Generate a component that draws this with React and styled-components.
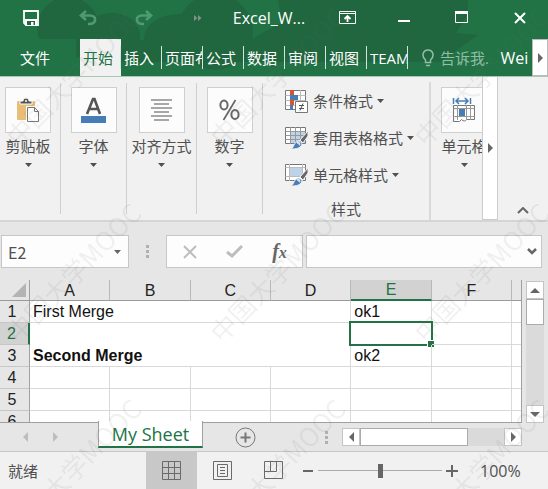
import React, { useState } from "react";
import styled, { createGlobalStyle } from "styled-components";

const UI_FONT = '"Open Sans", "Noto Sans CJK SC", sans-serif';
const CELL_FONT = '"Liberation Sans", Arial, sans-serif';
const GREEN = "#217346";

const GlobalStyle = createGlobalStyle`
  *, *::before, *::after { box-sizing: border-box; }
  body { margin: 0; font-family: ${UI_FONT}; font-size: 15px; color: #505050; }
  button, input { font: inherit; color: inherit; }
  button { padding: 0; border: 0; background: none; white-space: nowrap; }
  svg { display: block; flex: none; }
`;

const Window = styled.div`
  position: relative;
  display: flex;
  flex-direction: column;
  height: 100vh;
  overflow: hidden;
  background: #e6e6e6;
`;

const Header = styled.header`
  position: relative;
  flex: none;
  color: #fff;
  background: ${GREEN};
  border-bottom: 1px solid #a8c8b5;
`;

const Backdrop = styled.svg`
  position: absolute;
  inset: 0;
  width: 100%;
  height: 100%;
`;

const TitleBar = styled.div`
  position: relative;
  display: grid;
  grid-template-columns: 62px 52px 60px 48px 94px 62px 52px 62px 1fr;
  align-items: center;
  height: 39px;
  padding-bottom: 4px;
`;

const TitleButton = styled.button`
  display: flex;
  align-items: center;
  justify-content: center;
  height: 32px;
  color: ${(p) => (p.$muted ? "#4f9a70" : "#fff")};
`;

const Title = styled.div`
  font-size: 16px;
  text-align: center;
  white-space: nowrap;
`;

const Tabs = styled.nav`
  position: relative;
  display: flex;
  height: 37px;
`;

const Tab = styled.button`
  width: 41px;
  padding: 0 3px;
  display: flex;
  align-items: center;
  overflow: hidden;
  color: ${(p) => (p.$active ? GREEN : "#fff")};
  background: ${(p) => (p.$active ? "#f1f1f1" : "transparent")};
`;

const TabText = styled.span`
  flex: 1;
  overflow: hidden;
  text-align: left;
`;

const TabDivider = styled.span`
  flex: none;
  width: 1px;
  height: 23px;
  margin-right: -3px;
  background: #d5e5db;
`;

const FileTab = styled.button`
  width: 76px;
  margin-right: 4px;
  padding-right: 6px;
  background: ${GREEN};
`;

const TellMe = styled.button`
  display: flex;
  align-items: center;
  gap: 6px;
  margin-left: 14px;
  color: #93bda5;
`;

const Account = styled.button`
  flex: 1;
  padding-left: 8px;
  font-size: 16px;
  text-align: center;
`;

const TabScroll = styled.button`
  display: flex;
  align-items: center;
  justify-content: center;
  width: 16px;
  background: #fff;
  border: 1px solid #bbb;
  color: #666;
`;

const Ribbon = styled.section`
  flex: none;
  display: flex;
  height: 145px;
  background: #f1f1f1;
  border-bottom: 2px solid #d5d5d5;
`;

const Group = styled.div`
  flex: none;
  width: ${(p) => p.$width}px;
  margin: 6px 0;
  padding: 4px ${(p) => p.$pad || 0}px 0 0;
  border-right: 1px solid #cfcfcf;
`;

const BigButton = styled.button`
  display: flex;
  flex-direction: column;
  align-items: center;
  width: 100%;
`;

const IconBox = styled.span`
  display: flex;
  align-items: center;
  justify-content: center;
  width: 46px;
  height: 46px;
  margin-bottom: 2px;
  background: #fcfcfc;
  border: 1px solid #cfcfcf;
`;

const BigLabel = styled.span`
  height: 24px;
  margin-bottom: 4px;
  line-height: 22px;
`;

const StyleGroup = styled.div`
  flex: none;
  display: flex;
  flex-direction: column;
  width: 168px;
  margin-top: 5px;
  padding-left: 22px;
  border-right: 2px solid #d9d9d9;
`;

const StyleButton = styled.button`
  flex: none;
  display: flex;
  align-items: center;
  gap: 4px;
  height: 37px;
`;

const GroupName = styled.div`
  margin: 6px 22px 0 0;
  line-height: 20px;
  text-align: center;
`;

const ClippedGroup = styled.div`
  flex: none;
  width: 51px;
  margin-top: 6px;
  padding: 4px 0 0 10px;
  overflow: hidden;
`;

const ClippedInner = styled.div`
  width: 46px;
`;

const RibbonScroll = styled.button`
  display: flex;
  align-items: center;
  justify-content: center;
  width: 16px;
  background: #fff;
  border: 1px solid #ccc;
  border-top: 0;
  color: #666;
`;

const Collapse = styled.button`
  flex: 1;
  display: flex;
  align-items: flex-end;
  justify-content: center;
  padding-bottom: 6px;
  color: #666;
`;

const FormulaBar = styled.section`
  flex: none;
  display: flex;
  padding: 13px 6px 12px 1px;
`;

const Field = styled.div`
  display: flex;
  align-items: center;
  height: 33px;
  background: #fdfdfd;
  border: 1px solid #c6c6c6;
`;

const NameBox = styled(Field)`
  width: 128px;
  padding: 0 7px 0 6px;
`;

const FunctionBox = styled(Field)`
  width: 137px;
  margin-right: 3px;
`;

const FormulaField = styled(Field)`
  flex: 1;
  padding-right: 4px;
`;

const TextInput = styled.input`
  flex: 1;
  min-width: 0;
  padding: 0;
  border: 0;
  outline: 0;
  background: none;
  font-size: 16px;
  font-family: "Noto Sans CJK SC", sans-serif;
`;

const PlainButton = styled.button`
  display: flex;
  align-items: center;
  justify-content: center;
  flex: ${(p) => (p.$grow ? 1 : "none")};
  color: ${(p) => p.$color || "#666"};
`;

const FxText = styled.span`
  font: italic 700 20px/24px "Liberation Serif", serif;
`;

const FxSub = styled.span`
  font-size: 16px;
`;

const Grip = styled.span`
  display: flex;
  flex-direction: column;
  align-items: center;
  justify-content: center;
  gap: 2px;
  width: ${(p) => p.$width}px;
`;

const GripDot = styled.span`
  width: 3px;
  height: 3px;
  background: #b0b0b0;
`;

const Workspace = styled.main`
  flex: 1;
  min-height: 0;
  display: flex;
`;

const SheetView = styled.div`
  flex: 1;
  min-width: 0;
  overflow: hidden;
  border-bottom: 1px solid #a0a0a0;
`;

const Sheet = styled.table`
  width: 100%;
  table-layout: fixed;
  border-collapse: separate;
  border-spacing: 0;
  border-right: 1px solid #a0a0a0;
  font-family: ${CELL_FONT};
  font-size: 16px;
  line-height: 20px;
  color: #111;
  background: #fff;
`;

const Col = styled.col`
  width: ${(p) => (p.$width ? `${p.$width}px` : "auto")};
`;

const HeadCell = styled.th`
  height: 21px;
  padding: 0;
  line-height: 19px;
  font-weight: 400;
  color: ${(p) => (p.$active ? GREEN : "#222")};
  background: ${(p) => (p.$active ? "#d2d2d2" : "#e6e6e6")};
  border-right: 1px solid #b8b8b8;
  border-bottom: ${(p) => (p.$active ? `2px solid ${GREEN}` : "1px solid #9b9b9b")};
`;

const Corner = styled(HeadCell)`
  border-right-color: #a0a0a0;
`;

const CornerMark = styled.svg`
  margin-left: 12px;
`;

const EdgeHead = styled(HeadCell)`
  border-right: 0;
`;

const RowHead = styled.th`
  height: 22px;
  padding: 0 5px 0 0;
  font-weight: 400;
  color: ${(p) => (p.$active ? GREEN : "#222")};
  background: ${(p) => (p.$active ? "#d2d2d2" : "#e6e6e6")};
  border-right: ${(p) => (p.$active ? `2px solid ${GREEN}` : "1px solid #a0a0a0")};
  border-bottom: 1px solid #c6c6c6;
`;

const Cell = styled.td`
  position: relative;
  height: 22px;
  padding: 0 0 0 3px;
  white-space: nowrap;
  vertical-align: bottom;
  font-weight: ${(p) => (p.$bold ? 700 : 400)};
  border-right: 1px solid #d9d9d9;
  border-bottom: 1px solid #d9d9d9;
`;

const EdgeCell = styled(Cell)`
  border-right: 0;
`;

const Selection = styled.span`
  position: absolute;
  inset: -2px;
  border: 2px solid ${GREEN};
`;

const FillHandle = styled.span`
  position: absolute;
  right: -3px;
  bottom: -3px;
  width: 6px;
  height: 6px;
  background: ${GREEN};
  outline: 1px solid #fff;
`;

const VScroll = styled.div`
  flex: none;
  display: flex;
  flex-direction: column;
  width: 18px;
  margin: 1px 4px 0;
  background: #dadada;
`;

const ScrollButton = styled.button`
  flex: none;
  display: flex;
  align-items: center;
  justify-content: center;
  width: 18px;
  height: 18px;
  background: #fff;
  border: 1px solid #c4c4c4;
  color: #666;
`;

const ScrollThumb = styled.span`
  flex: none;
  width: ${(p) => p.$w}px;
  height: ${(p) => p.$h}px;
  background: #fff;
  border: 1px solid #ababab;
`;

const Spacer = styled.span`
  flex: 1;
`;

const SheetBar = styled.section`
  flex: none;
  display: flex;
  align-items: center;
  height: 29px;
  padding-right: 26px;
  border-bottom: 1px solid #c6c6c6;
`;

const SheetNav = styled.div`
  display: flex;
  justify-content: space-between;
  width: 98px;
  padding: 0 40px 0 23px;
`;

const SheetTab = styled.button`
  position: relative;
  align-self: flex-start;
  width: 105px;
  height: 27px;
  margin-top: -2px;
  font-size: 18px;
  line-height: 24px;
  color: ${GREEN};
  background: #fff;
  border: solid #a0a0a0;
  border-width: 0 1px;
  border-bottom: 2px solid ${GREEN};
`;

const AddSheet = styled.button`
  margin-left: 32px;
  color: #777;
`;

const HScroll = styled.div`
  display: flex;
  width: 180px;
  background: #dadada;
`;

const StatusBar = styled.footer`
  flex: none;
  display: flex;
  align-items: center;
  height: 37px;
  background: #f1f1f1;
`;

const Status = styled.span`
  width: 146px;
  padding-left: 8px;
`;

const ViewButton = styled.button`
  display: flex;
  align-items: center;
  justify-content: center;
  width: 51px;
  height: 100%;
  color: #6a6a6a;
  background: ${(p) => (p.$active ? "#c8c8c8" : "transparent")};
`;

const ZoomSlider = styled.input`
  appearance: none;
  flex: 1;
  min-width: 0;
  height: 16px;
  margin: 0 4px 0 3px;
  background: linear-gradient(#aaa, #aaa) center / 100% 1px no-repeat;
  &::-webkit-slider-thumb {
    appearance: none;
    width: 5px;
    height: 14px;
    background: #666;
  }
`;

const ZoomValue = styled.span`
  width: 90px;
  padding-left: 22px;
  font-size: 16px;
`;

const Watermarks = styled.div`
  position: absolute;
  inset: -22px auto auto -29px;
  display: grid;
  grid-template-columns: repeat(3, 204px);
  grid-auto-rows: 196px;
  pointer-events: none;
`;

const Watermark = styled.span`
  display: flex;
  align-items: center;
  justify-content: center;
  font: 26px/1 "Noto Sans CJK SC", sans-serif;
  color: rgba(110, 110, 110, 0.1);
  white-space: nowrap;
  rotate: -46deg;
`;

const arrows = {
  down: { w: 7, h: 4, d: "M0 0h7L3.500 4z" },
  up: { w: 10, h: 5, d: "M0 5h10L5 0z" },
  bigDown: { w: 10, h: 5, d: "M0 0h10L5 5z" },
  left: { w: 5, h: 10, d: "M5 0v10L0 5z" },
  right: { w: 5, h: 10, d: "M0 0v10l5-5z" },
};

function Arrow({ dir }) {
  const { w, h, d } = arrows[dir];
  return (
    <svg width={w} height={h} aria-hidden="true">
      <path d={d} fill="currentColor" />
    </svg>
  );
}

function Icon({ w = 16, h = w, children, ...rest }) {
  return (
    <svg width={w} height={h} viewBox={`0 0 ${w} ${h}`} fill="none" stroke="currentColor" aria-hidden="true" {...rest}>
      {children}
    </svg>
  );
}

const SaveIcon = () => (
  <Icon w={16}>
    <path d="M1 1h14v14H3l-2-2z" strokeWidth="1.800" />
    <path d="M2 9h12v5H2z" fill="currentColor" stroke="none" />
    <path d="M4 11h8v4h-1.500v-3H8v3H4z" fill="#20683f" stroke="none" />
  </Icon>
);

const UndoIcon = ({ flip }) => (
  <Icon w={18} h={16}>
    <g transform={flip ? "translate(18 0) scale(-1 1)" : undefined} strokeWidth="2.600">
      <path d="M7 1L2 5.500L7 10M2 5.500H11C18 5.500 18 14 10 14H9" />
    </g>
  </Icon>
);

const PasteIcon = () => (
  <Icon w={22} h={24}>
    <rect x="0" y="3" width="18" height="19" rx="1" fill="#e8bd78" stroke="none" />
    <path d="M3 6V3h3c0-4 6-4 6 0h3v3z" fill="#555" stroke="#fcfcfc" />
    <circle cx="9" cy="3" r="1" fill="#fff" stroke="none" />
    <path d="M10.500 9.500h7l4 4v10h-11z" fill="#fff" stroke="#fcfcfc" strokeWidth="3" />
    <path d="M10.500 9.500h7l4 4v10h-11zM17.500 9.500v4h4" fill="#fff" stroke="#777" />
  </Icon>
);

const FontIcon = () => (
  <Icon w={26} h={26}>
    <path d="M6 17L12 2h1.500L19 17M8 12h9" stroke="#555" strokeWidth="2.600" />
    <path d="M0 19h25v7H0z" fill="#467db6" stroke="none" />
  </Icon>
);

const AlignIcon = () => (
  <Icon w={22} h={24}>
    <path d="M0 2h21M3 6h15M0 10h21M3 14h15M0 18h21M3 22h15" stroke="#8a8a8a" strokeWidth="1.500" />
  </Icon>
);

const PercentIcon = () => (
  <Icon w={22} h={22}>
    <g stroke="#666" strokeWidth="2">
      <ellipse cx="5" cy="6" rx="3.600" ry="4.500" />
      <ellipse cx="16" cy="15.500" rx="3.600" ry="4.500" />
      <path d="M16.500 1L4.500 21" strokeWidth="1.700" />
    </g>
  </Icon>
);

const CondIcon = () => (
  <Icon w={24}>
    <path d="M.5 1.500h20v19H.5z" fill="#fff" stroke="#777" />
    <path d="M.5 6.500h20M.5 11.500h20M.5 16.500h20M5.500 1v20M15.500 1v20" stroke="#bbb" />
    <path d="M5 1h4v5H5zM5 11h4v5H5z" fill="#d75433" stroke="none" />
    <path d="M5 6h8v5H5zM5 16h3v5H5z" fill="#467db6" stroke="none" />
    <path d="M10.500 12.500h12v11h-12z" fill="#fff" stroke="#777" />
    <path d="M14 16.500h5M14 19.500h5M18 14.500l-3 7" stroke="#555" />
  </Icon>
);

const Brush = () => (
  <g>
    <path d="M23 5l-8 9l3 3l5-7z" fill="#666" stroke="#f1f1f1" />
    <path d="M5 23c4 0 3-6 8-8c3 0 5 3 3 5c-2 3-7 3-11 3z" fill="#467db6" stroke="#f1f1f1" />
    <path d="M12 17c2-1 3 1 2 2" stroke="#d9e7f3" strokeWidth="2" />
  </g>
);

const TableIcon = () => (
  <Icon w={24}>
    <path d="M.5 1.500h20v16H.5z" fill="#fff" stroke="#777" />
    <path d="M6 6h14v11H6z" fill="#bfd3e8" stroke="none" />
    <path d="M.5 5.500h20M.5 9.500h20M.5 13.500h20M5.500 1v17M10.500 1v17M15.500 1v17" stroke="#999" />
    <Brush />
  </Icon>
);

const CellStyleIcon = () => (
  <Icon w={24}>
    <path d="M.5 1.500h20v16H.5z" fill="#fff" stroke="#777" />
    <path d="M.5 4.500h20M.5 13.500h20M4.500 1v17M17.500 1v17" stroke="#bbb" />
    <path d="M5 5h12v8H5z" fill="#bfd3e8" stroke="none" />
    <Brush />
  </Icon>
);

const CellsIcon = () => (
  <Icon w={24} h={26}>
    <path d="M1.500 1v6M18.500 1v6M4 4h12M7 1L4 4l3 3M13 1l3 3l-3 3" stroke="#467db6" strokeWidth="1.500" />
    <path d="M1.500 8.500h21v14h-8c-1 2-3 2-5 0l-2 2h-6z" fill="#fff" stroke="#777" />
    <path d="M1.500 11.500h21M1.500 19.500h21M5.500 8v15M14.500 8v15M18.500 8v15" stroke="#999" />
    <path d="M7 12h6v7H7z" fill="#467db6" stroke="none" />
  </Icon>
);

const tabs = ["开始", "插入", "页面布局", "公式", "数据", "审阅", "视图", "TEAM"];
const bigGroups = [
  { label: "剪贴板", width: 61, pad: 4, icon: <PasteIcon /> },
  { label: "字体", width: 66, icon: <FontIcon /> },
  { label: "对齐方式", width: 70, icon: <AlignIcon /> },
  { label: "数字", width: 66, icon: <PercentIcon /> },
];
const styleActions = [
  { label: "条件格式", icon: <CondIcon /> },
  { label: "套用表格格式", icon: <TableIcon /> },
  { label: "单元格样式", icon: <CellStyleIcon /> },
];
const columns = ["A", "B", "C", "D", "E", "F"];

function LargeAction({ icon, label }) {
  return (
    <BigButton>
      <IconBox>{icon}</IconBox>
      <BigLabel>{label}</BigLabel>
      <Arrow dir="down" />
    </BigButton>
  );
}

function GripDots({ width }) {
  return (
    <Grip $width={width}>
      <GripDot />
      <GripDot />
      <GripDot />
    </Grip>
  );
}

function EmptyRow({ n }) {
  return (
    <tr>
      <RowHead scope="row">{n}</RowHead>
      {columns.map((c) => (
        <Cell key={c} />
      ))}
      <EdgeCell />
    </tr>
  );
}

export default function App() {
  const [zoom, setZoom] = useState(100);
  return (
    <Window>
      <GlobalStyle />
      <Header>
        <Backdrop viewBox="0 0 548 76" preserveAspectRatio="none" aria-hidden="true">
          <g fill="#20663e">
            <circle cx="68" cy="28" r="31" />
            <ellipse cx="112" cy="36" rx="28" ry="23" />
            <circle cx="215" cy="32" r="38" />
            <ellipse cx="180" cy="38" rx="36" ry="24" />
            <path d="M278 0H468V14L456 33L478 35L440 62H120V40H250L282 22z" />
          </g>
        </Backdrop>
        <TitleBar>
          <TitleButton aria-label="保存"><SaveIcon /></TitleButton>
          <TitleButton aria-label="撤消" $muted><UndoIcon /></TitleButton>
          <TitleButton aria-label="恢复" $muted><UndoIcon flip /></TitleButton>
          <TitleButton aria-label="更多命令" $muted>
            <Icon w={8} h={6}><path d="M0 0v6l3.500-3zM4 0v6l3.500-3z" fill="#84908a" stroke="none" /></Icon>
          </TitleButton>
          <Title>Excel_W...</Title>
          <TitleButton aria-label="功能区显示选项">
            <Icon w={17} h={13}>
              <path d="M.5.5h16v12H.5zM.5 2.500h16" />
              <path d="M8.500 11V5.500M5.500 8L8.500 5L11.500 8" strokeWidth="1.800" />
            </Icon>
          </TitleButton>
          <TitleButton aria-label="最小化">
            <Icon w={12}><path d="M0 9h12" strokeWidth="2" /></Icon>
          </TitleButton>
          <TitleButton aria-label="最大化">
            <Icon w={13}><path d="M.5.5h12v11H.5z" /><path d="M0 1.500h13" strokeWidth="3" /></Icon>
          </TitleButton>
          <TitleButton aria-label="关闭">
            <Icon w={12}><path d="M1 1l10 10M11 1L1 11" strokeWidth="2" /></Icon>
          </TitleButton>
        </TitleBar>
        <Tabs>
          <FileTab>文件</FileTab>
          {tabs.map((t, i) => (
            <Tab key={t} $active={i === 0}>
              <TabText>{t}</TabText>
              <TabDivider />
            </Tab>
          ))}
          <TellMe>
            <Icon w={12} h={18} strokeWidth="1.500">
              <path d="M3.500 13.500V11C-1 7 1 1 6 1s7 6 2.500 10v2.500zM4 16.500h4" />
            </Icon>
            告诉我.
          </TellMe>
          <Account>Wei</Account>
          <TabScroll aria-label="向右滚动选项卡"><Arrow dir="right" /></TabScroll>
        </Tabs>
      </Header>

      <Ribbon>
        {bigGroups.map((g) => (
          <Group key={g.label} $width={g.width} $pad={g.pad}>
            <LargeAction icon={g.icon} label={g.label} />
          </Group>
        ))}
        <StyleGroup>
          {styleActions.map((a) => (
            <StyleButton key={a.label}>
              {a.icon}
              {a.label}
              <Arrow dir="down" />
            </StyleButton>
          ))}
          <GroupName>样式</GroupName>
        </StyleGroup>
        <ClippedGroup>
          <ClippedInner>
            <LargeAction icon={<CellsIcon />} label="单元格" />
          </ClippedInner>
        </ClippedGroup>
        <RibbonScroll aria-label="向右滚动功能区"><Arrow dir="right" /></RibbonScroll>
        <Collapse aria-label="折叠功能区">
          <Icon w={12} h={7}><path d="M1 6l5-5l5 5" strokeWidth="2" /></Icon>
        </Collapse>
      </Ribbon>

      <FormulaBar>
        <NameBox>
          <TextInput aria-label="名称框" defaultValue="E2" />
          <PlainButton aria-label="打开名称列表"><Arrow dir="down" /></PlainButton>
        </NameBox>
        <GripDots width={37} />
        <FunctionBox>
          <PlainButton aria-label="取消" $grow $color="#bdbdbd">
            <Icon w={14}><path d="M1 1l12 12M13 1L1 13" strokeWidth="2" /></Icon>
          </PlainButton>
          <PlainButton aria-label="输入" $grow $color="#bdbdbd">
            <Icon w={17} h={13}><path d="M1 7l5 4L16 1" strokeWidth="3" /></Icon>
          </PlainButton>
          <PlainButton aria-label="插入函数" $grow>
            <FxText>f<FxSub>x</FxSub></FxText>
          </PlainButton>
        </FunctionBox>
        <FormulaField>
          <TextInput aria-label="编辑栏" />
          <PlainButton aria-label="展开编辑栏">
            <Icon w={10} h={7}><path d="M1 1l4 4l4-4" strokeWidth="2.500" /></Icon>
          </PlainButton>
        </FormulaField>
      </FormulaBar>

      <Workspace>
        <SheetView>
          <Sheet>
            <colgroup>
              <Col $width={30} />
              {columns.map((c) => <Col key={c} />)}
              <Col $width={9} />
            </colgroup>
            <thead>
              <tr>
                <Corner aria-label="全选">
                  <CornerMark width="14" height="14" aria-hidden="true">
                    <path d="M14 0v14H0z" fill="#b4b4b4" />
                  </CornerMark>
                </Corner>
                {columns.map((c) => (
                  <HeadCell key={c} scope="col" $active={c === "E"}>{c}</HeadCell>
                ))}
                <EdgeHead />
              </tr>
            </thead>
            <tbody>
              <tr>
                <RowHead scope="row">1</RowHead>
                <Cell colSpan={4}>First Merge</Cell>
                <Cell>ok1</Cell>
                <Cell />
                <EdgeCell />
              </tr>
              <tr>
                <RowHead scope="row" $active>2</RowHead>
                <Cell colSpan={4} rowSpan={2} $bold>Second Merge</Cell>
                <Cell><Selection><FillHandle /></Selection></Cell>
                <Cell />
                <EdgeCell />
              </tr>
              <tr>
                <RowHead scope="row">3</RowHead>
                <Cell>ok2</Cell>
                <Cell />
                <EdgeCell />
              </tr>
              <EmptyRow n={4} />
              <EmptyRow n={5} />
              <EmptyRow n={6} />
            </tbody>
          </Sheet>
        </SheetView>
        <VScroll>
          <ScrollButton aria-label="向上滚动"><Arrow dir="up" /></ScrollButton>
          <ScrollThumb $w={18} $h={26} />
          <Spacer />
          <ScrollButton aria-label="向下滚动"><Arrow dir="bigDown" /></ScrollButton>
        </VScroll>
      </Workspace>

      <SheetBar>
        <SheetNav>
          <PlainButton aria-label="上一个工作表" $color="#bdbdbd"><Arrow dir="left" /></PlainButton>
          <PlainButton aria-label="下一个工作表" $color="#bdbdbd"><Arrow dir="right" /></PlainButton>
        </SheetNav>
        <SheetTab>My Sheet</SheetTab>
        <AddSheet aria-label="新工作表">
          <Icon w={21}>
            <circle cx="10.500" cy="10.500" r="9.500" />
            <path d="M10.500 5.500v10M5.500 10.500h10" strokeWidth="2" />
          </Icon>
        </AddSheet>
        <Spacer />
        <GripDots width={32} />
        <HScroll>
          <ScrollButton aria-label="向左滚动"><Arrow dir="left" /></ScrollButton>
          <ScrollThumb $w={108} $h={18} />
          <Spacer />
          <ScrollButton aria-label="向右滚动"><Arrow dir="right" /></ScrollButton>
        </HScroll>
      </SheetBar>

      <StatusBar>
        <Status>就绪</Status>
        <ViewButton aria-label="普通" $active>
          <Icon w={20}><path d="M.5.5h18v18H.5zM.5 6.500h18M.5 12.500h18M6.500.5v18M12.500.5v18" /></Icon>
        </ViewButton>
        <ViewButton aria-label="页面布局">
          <Icon w={20}><path d="M.5.5h18v18H.5zM4.500 3.500h10v12h-10zM7 6.500h5M7 9.500h5M7 12.500h5" /></Icon>
        </ViewButton>
        <ViewButton aria-label="分页预览">
          <Icon w={20}><path d="M.5.5h18v17H.5zM.5 10.500h12M6.500.5v10M12.500.5v10" /></Icon>
        </ViewButton>
        <PlainButton aria-label="缩小">
          <Icon w={16} h={12}><path d="M4 6h10" strokeWidth="2" /></Icon>
        </PlainButton>
        <ZoomSlider
          type="range"
          aria-label="显示比例"
          min="10"
          max="190"
          value={zoom}
          onChange={(e) => setZoom(Number(e.target.value))}
        />
        <PlainButton aria-label="放大">
          <Icon w={12}><path d="M0 6h12M6 0v12" strokeWidth="2" /></Icon>
        </PlainButton>
        <ZoomValue>{zoom}%</ZoomValue>
      </StatusBar>

      <Watermarks aria-hidden="true">
        {Array.from({ length: 9 }, (_, i) => (
          <Watermark key={i}>中国大学MOOC</Watermark>
        ))}
      </Watermarks>
    </Window>
  );
}
